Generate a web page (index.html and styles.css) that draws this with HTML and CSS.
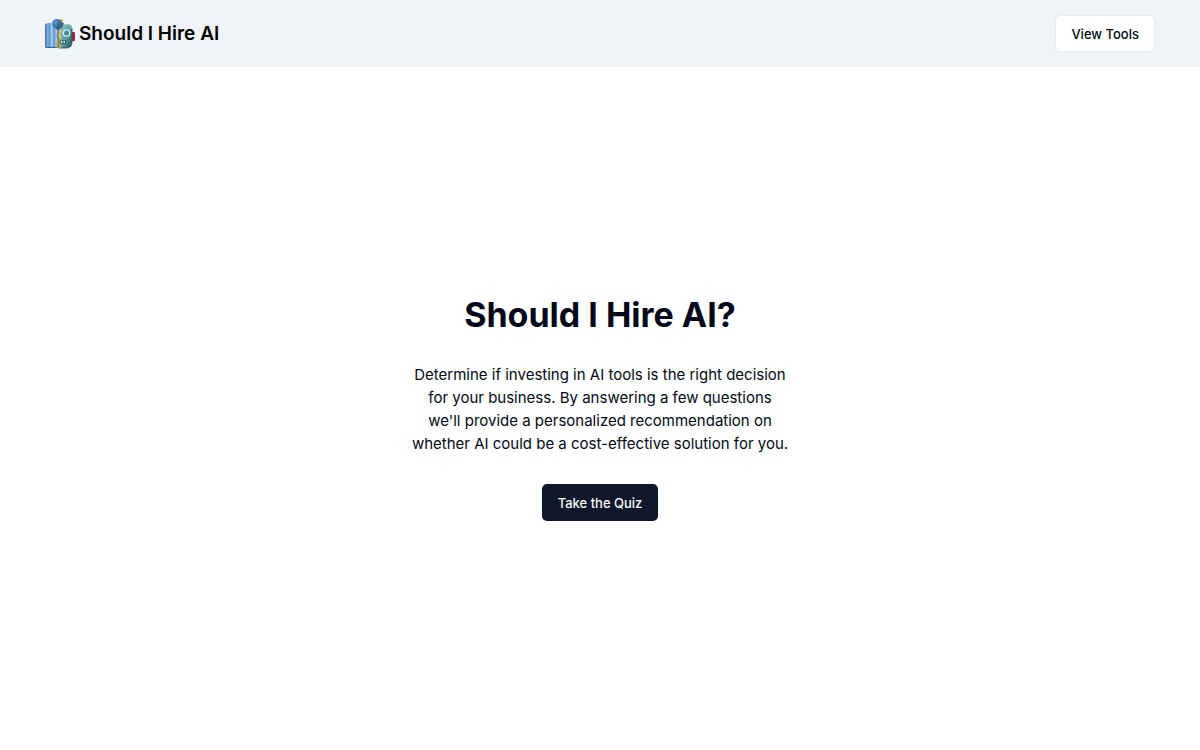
FILE: index.html
```html
<!DOCTYPE html>
<html lang="en">
<head>
    <meta charset="UTF-8">
    <meta name="viewport" content="width=device-width, initial-scale=1.0">
    <title>Should I Hire AI</title>
    <link rel="stylesheet" href="styles.css">
</head>
<body>
    <!-- HEADER -->
    <header class="header">
        <a href="#" class="brand">
            <svg class="logo" viewBox="0 0 30 30" aria-hidden="true">
                <defs>
                    <linearGradient id="curtain" x1="0" y1="0" x2="1" y2="0">
                        <stop offset="0" stop-color="#3f6794"/>
                        <stop offset=".18" stop-color="#83b3e3"/>
                        <stop offset=".3" stop-color="#5e94cf"/>
                        <stop offset=".45" stop-color="#a5d0f3"/>
                        <stop offset=".6" stop-color="#6298d0"/>
                        <stop offset=".78" stop-color="#a0cbf0"/>
                        <stop offset="1" stop-color="#537fab"/>
                    </linearGradient>
                    <linearGradient id="face" x1="0" y1="0" x2="1" y2="1">
                        <stop offset="0" stop-color="#9ccaca"/>
                        <stop offset=".55" stop-color="#5f9fa0"/>
                        <stop offset="1" stop-color="#1b4d52"/>
                    </linearGradient>
                    <radialGradient id="knob" cx=".35" cy=".3" r=".8">
                        <stop offset="0" stop-color="#5b9ccc"/>
                        <stop offset="1" stop-color="#194a78"/>
                    </radialGradient>
                </defs>
                <!-- ear -->
                <rect x="26" y="13" width="4" height="9" rx="1" fill="#a81f40"/>
                <!-- robot half -->
                <path d="M14 5h9q4 0 4 4v14q0 6-6 6h-7z" fill="url(#face)"/>
                <path d="M27 9v14q0 6-6 6h-7" fill="none" stroke="#1f4a50" stroke-width=".8"/>
                <path d="M15 5.500h8q3.500 0 3.500 4" fill="none" stroke="#b4d3d2" stroke-width=".8"/>
                <circle cx="21.500" cy="14" r="3.200" fill="#438a9b" stroke="#c9eff4" stroke-width="1.300"/>
                <path d="M15.500 21.500h5.500v3h-5.500z" fill="#173e42"/>
                <path d="M16 23h1.500M18.500 23H20" stroke="#dbebe8" stroke-width="1.800"/>
                <!-- blue half -->
                <path d="M3 4h12v25H2q-2 0-2-2V7q0-3 3-3z" fill="url(#curtain)"/>
                <path d="M.5 28.400H15" stroke="#375f89" stroke-width="1"/>
                <!-- tie and shirt -->
                <path d="M12 9l3 2 1 6-1 6 1 6h-4l-1-4 2-6z" fill="#b9a66d"/>
                <path d="M13.500 10l-1 7 1.500 6-1 6" fill="none" stroke="#6f6a4e" stroke-width="1"/>
                <path d="M15.500 10l-1 6 1 4" fill="none" stroke="#e5cf8b" stroke-width="1"/>
                <!-- cap -->
                <path d="M15 0l3 1-1 8-2 2z" fill="#c69b3f"/>
                <path d="M7 4q1-4 5-4 4 0 4 4 0 4-3 7-2-1-3-2-3-2-3-5z" fill="url(#knob)"/>
                <path d="M16 3l3 1-2 5-2 1z" fill="#35668b"/>
            </svg>
            <span class="brand-name">Should I Hire AI</span>
        </a>
        <button type="button" class="btn btn-light">View Tools</button>
    </header>
    <!-- MAIN CONTENT -->
    <main class="hero">
        <h1 class="title">Should I Hire AI?</h1>
        <p class="text">Determine if investing in AI tools is the right decision for your business. By answering a few questions we'll provide a personalized recommendation on whether AI could be a cost-effective solution for you.</p>
        <button type="button" class="btn btn-dark">Take the Quiz</button>
    </main>
</body>
</html>
```
FILE: styles.css
```css
*{
    box-sizing: border-box;
}
body{
    display: flex;
    flex-direction: column;
    min-height: 100vh;
    margin: 0;
    background-color: #ffffff;
    color: #020817;
    font-family: Inter, sans-serif;
}
/* HEADER */
.header{
    display: flex;
    align-items: center;
    justify-content: space-between;
    padding: 15px 45px;
    background-color: #f0f4f9;
}
.brand{
    display: flex;
    align-items: center;
    gap: 4px;
    color: #000000;
    text-decoration: none;
}
.logo{
    width: 30px;
    height: 30px;
}
.brand-name{
    font-size: 19px;
    font-weight: 600;
    line-height: 26px;
}
/* BUTTONS */
.btn{
    height: 37px;
    padding: 0 15px;
    border: 1px solid transparent;
    border-radius: 5px;
    font-family: inherit;
    font-size: 13px;
    font-weight: 500;
    cursor: pointer;
}
.btn-light{
    border-color: #e7ecf2;
    background-color: #ffffff;
    color: #020817;
}
.btn-dark{
    background-color: #0f172a;
    color: #f8fafc;
}
/* HERO */
.hero{
    display: flex;
    flex: 1;
    flex-direction: column;
    align-items: center;
    justify-content: center;
    gap: 29px;
    text-align: center;
}
.title{
    margin: 0;
    font-size: 34px;
    font-weight: 700;
    line-height: 38px;
}
.text{
    max-width: 378px;
    margin: 0;
    font-size: 15px;
    line-height: 23px;
}
```
